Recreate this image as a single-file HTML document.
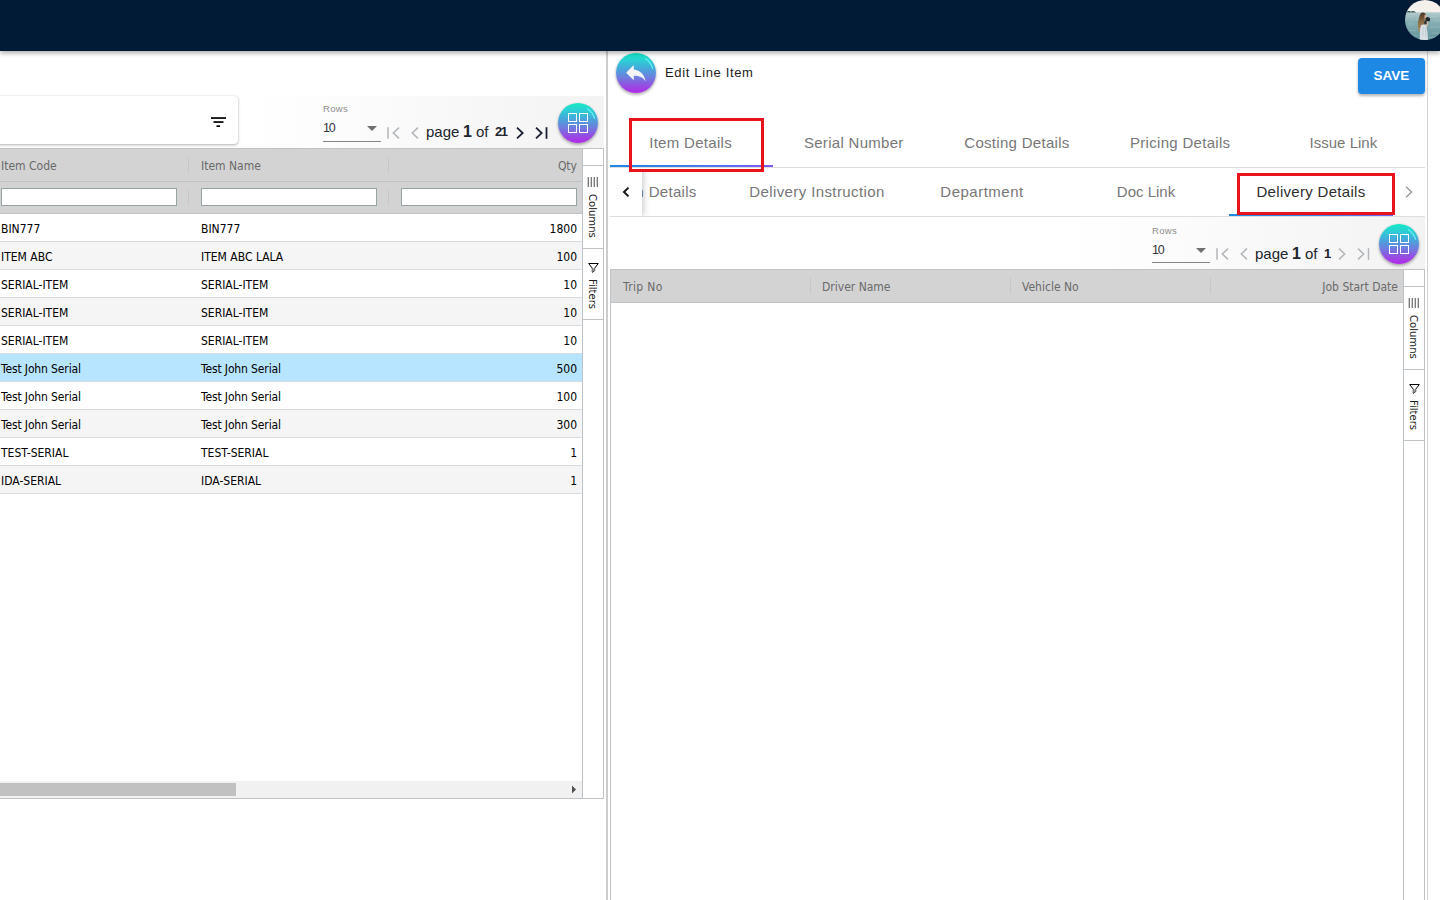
<!DOCTYPE html>
<html lang="en">
<head>
<meta charset="utf-8">
<title>Edit Line Item</title>
<style>
*{box-sizing:border-box;margin:0;padding:0}
html,body{width:1440px;height:900px;overflow:hidden;background:#fff}
body{position:relative;font-family:"Liberation Sans",sans-serif;font-size:12px;color:#000}
.abs{position:absolute}
#topbar{position:absolute;left:0;top:0;width:1440px;height:51px;background:#011a35;box-shadow:0 2px 5px rgba(0,0,0,.34);z-index:20}
#avatar{position:absolute;left:1405px;top:0;width:40px;height:40px;z-index:21}
#searchcard{position:absolute;left:-20px;top:96px;width:258px;height:48px;background:#fff;border-radius:4px;box-shadow:0 1px 3px rgba(0,0,0,.3),0 0 1px rgba(0,0,0,.18);z-index:3}
.pagbar{position:absolute;height:52px}
.pagbar .lbl{position:absolute;font-size:9.5px;letter-spacing:.3px;line-height:12px;color:#8d8d8d}
.pagbar .val{position:absolute;font-size:12.5px;line-height:14px;color:#333}
.pagbar .ul{position:absolute;height:1px;background:#858585}
.pagbar .dd{position:absolute;width:0;height:0;border-left:5px solid transparent;border-right:5px solid transparent;border-top:5px solid #707070}
.pagbar .pt{position:absolute;font-size:15px;line-height:18px;color:#20242c;white-space:nowrap}
.pagbar .pt.b{font-weight:bold;font-size:16px}
.pagbar svg{position:absolute;overflow:visible}
.fab{position:absolute;width:40px;height:40px;border-radius:50%;background:linear-gradient(180deg,#12eac4 0%,#2bd0d4 18%,#47a6db 40%,#6c80de 60%,#9251e2 80%,#b22ae8 100%);box-shadow:0 2px 3px rgba(0,0,0,.28),0 0 2px rgba(0,0,0,.15)}
.fab svg{position:absolute;left:0;top:0}
.grid{position:absolute;font-family:"DejaVu Sans Condensed","Liberation Sans",sans-serif;font-size:12px;color:#000;overflow:hidden}
.hrow{position:absolute;left:0;background:#d3d3d3}
.hline{position:absolute;left:0;height:1px;background:#bdc3c7}
.hcell{position:absolute;color:#6a6a6a;font-size:12px;white-space:nowrap;line-height:16px}
.hsep{position:absolute;width:1px;background:#c4c8ca}
.finp{position:absolute;height:18px;background:#fff;border:1px solid #95a5a6}
.row{position:absolute;left:0;height:28px;border-bottom:1px solid #d9dcde;background:#fff}
.row.odd{background:#f5f5f5}
.row.sel{background:#b7e4ff}
.row span{position:absolute;top:7px;line-height:16px;white-space:nowrap}
.side{position:absolute;background:#fff;border:1px solid #bdc3c7;font-family:"DejaVu Sans Condensed","Liberation Sans",sans-serif}
.side .b{position:absolute;left:0;width:100%;height:1px;background:#bdc3c7}
.side svg{position:absolute;overflow:visible}
.vtxt{position:absolute;writing-mode:vertical-rl;font-size:11.2px;color:#1a1a1a;line-height:14px;white-space:nowrap}
.tab{position:absolute;font-size:15px;letter-spacing:.3px;color:#777;text-align:center;white-space:nowrap;line-height:20px;height:20px}
.tab.on{color:#2e2e2e}
.ink{position:absolute;height:2px}
.redbox{position:absolute;border:3px solid #e8121c;z-index:5}
</style>
</head>
<body>
<div id="topbar"></div>
<svg id="avatar" width="40" height="40" viewBox="0 0 40 40"><defs><clipPath id="avc"><circle cx="20" cy="20" r="20"/></clipPath><linearGradient id="sky" x1="0" y1="0" x2="1" y2="0"><stop offset="0" stop-color="#f1f1ee"/><stop offset="1" stop-color="#f7f0ea"/></linearGradient><linearGradient id="sea" x1="0" y1="0" x2="0" y2="1"><stop offset="0" stop-color="#b4cccd"/><stop offset=".25" stop-color="#86aeb2"/><stop offset=".6" stop-color="#6a9aa0"/><stop offset="1" stop-color="#4f828a"/></linearGradient><linearGradient id="hair" x1="0" y1="0" x2="0" y2="1"><stop offset="0" stop-color="#4a3526"/><stop offset=".45" stop-color="#8a6a45"/><stop offset="1" stop-color="#b4946a"/></linearGradient></defs><g clip-path="url(#avc)"><rect width="40" height="40" fill="url(#sea)" y="12"/><rect width="40" height="12.300" fill="url(#sky)"/><path d="M1 12.600c.8-1.300 2.200-1.900 3.600-1.500c.9.300 1.400.5 2.200.1c1.200-.600 2.600-.300 3.400.500c.5.500.8.800 1.200.9z" fill="#3f5b56"/><g stroke="#c4d8d9" stroke-opacity=".45" stroke-width=".6" fill="none"><path d="M2 17h6M11 19.500h5M26 16.500h7M29 21h8M3 24h7M25 27h9M5 30.500h6M27 33h7M9 35.500h4M24 37.500h6M30 14h6M4 14.500h5"/></g><path d="M17 12.700c2-.600 3.600.500 3.900 2.300l-.3 3.200l-1 3l.3 4.500l-1.500 7.300l-3.600-.500c-1.800-2.800-2.400-6.500-1.700-10.500c.4-2.400.9-4.500 1.500-6.300c.5-1.600 1.300-2.700 2.400-3z" fill="url(#hair)"/><path d="M19.700 14.600c1 .2 1.700 1 1.700 2.200c0 1.500-.5 2.900-1.500 3.500c-.5-1.800-.6-3.900-.2-5.700z" fill="#d8b399"/><path d="M20.800 21.200c.9-.3 1.900.1 2.100.9c.2 1.600-.2 3.400-1 5.100l-1.300-.4c.4-1.800.5-3.800.2-5.600z" fill="#dcb9a2"/><path d="M16.300 25c1.600-.900 3.700-.800 4.700.300l1.200 5.400l.9 9.300h-8.600l.6-8c-.2-2.700.3-5.200 1.200-7z" fill="#d9dfe6"/><path d="M18.200 26.500c.2 3 .1 6-.5 9.500M20.300 28c.4 3 .6 6 .5 9" stroke="#b4bfca" stroke-width=".6" fill="none"/><rect x="20.400" y="17.700" width="4.600" height="3.600" rx=".7" fill="#1e2528"/><rect x="21.600" y="17" width="2" height="1.200" fill="#2a3236"/><rect x="19.300" y="21" width="2.400" height="3.200" rx=".8" fill="#2a2f30"/></g></svg>
<div class="pagbar" style="left:244px;top:96px;width:360px;background:linear-gradient(90deg,#fff 0,#fdfdfd 20%,#f3f3f3 100%)">
<div class="lbl" style="left:79px;top:7px">Rows</div>
<div class="val" style="left:79px;top:25px;letter-spacing:-1.2px">10</div>
<div class="ul" style="left:79px;top:45px;width:58px"></div>
<div class="dd" style="left:123px;top:30px"></div>
<svg style="left:143px;top:31px" width="13" height="12" viewBox="0 0 13 12" fill="none" stroke="#b2b5b9" stroke-width="1.5"><path d="M1 0.2V11.8"/><path d="M12 0.6L6.3 6L12 11.4"/></svg>
<svg style="left:167px;top:31px" width="8" height="12" viewBox="0 0 8 12" fill="none" stroke="#b2b5b9" stroke-width="1.5"><path d="M7 0.6L1.3 6L7 11.4"/></svg>
<div class="pt" style="left:182px;top:27px">page</div>
<div class="pt b" style="left:219px;top:27px">1</div>
<div class="pt" style="left:232px;top:27px">of</div>
<div class="pt b" style="left:251px;top:27px;font-size:13px;letter-spacing:-1.5px">21</div>
<svg style="left:272px;top:31px" width="8" height="12" viewBox="0 0 8 12" fill="none" stroke="#1c2133" stroke-width="1.8"><path d="M1 0.6L6.7 6L1 11.4"/></svg>
<svg style="left:291px;top:31px" width="13" height="12" viewBox="0 0 13 12" fill="none" stroke="#1c2133" stroke-width="1.8"><path d="M1 0.6L6.7 6L1 11.4"/><path d="M11.5 0.2V11.8"/></svg>
</div>
<div id="searchcard"><svg class="abs" style="left:228px;top:16px" width="20" height="20" viewBox="0 0 20 20"><g fill="#000"><rect x="3" y="5.200" width="15" height="1.700"/><rect x="5.500" y="9.200" width="10" height="1.700"/><rect x="8.500" y="13.300" width="3.600" height="1.700"/></g></svg></div>
<div class="fab" style="left:558px;top:103px"><svg width="40" height="40" viewBox="0 0 40 40" fill="none"><g stroke="#fff" stroke-width="1"><rect x="10.5" y="10.5" width="8" height="8"/><rect x="21.5" y="10.5" width="8" height="8"/><rect x="10.5" y="21.5" width="8" height="8"/><rect x="21.5" y="21.5" width="8" height="8"/></g><path d="M29.5 5.8 A17.5 17.5 0 0 1 36.6 15.5" stroke="#6ffaf2" stroke-opacity=".9" stroke-width="1.2" stroke-linecap="round"/></svg></div>
<div class="grid" style="left:0;top:148px;width:582px;height:651px;border-top:1px solid #bdc3c7;border-bottom:1px solid #bdc3c7">
<div class="hrow" style="top:0;width:582px;height:64px"></div>
<div class="hline" style="top:32px;width:582px"></div>
<div class="hline" style="top:64px;width:582px"></div>
<div class="hcell" style="left:1px;top:9px">Item Code</div>
<div class="hcell" style="left:201px;top:9px">Item Name</div>
<div class="hcell" style="right:5px;top:9px">Qty</div>
<div class="hsep" style="left:188px;top:8px;height:16px"></div>
<div class="hsep" style="left:188px;top:41px;height:15px"></div>
<div class="hsep" style="left:388px;top:8px;height:16px"></div>
<div class="hsep" style="left:388px;top:41px;height:15px"></div>
<div class="finp" style="left:1px;top:39px;width:176px"></div>
<div class="finp" style="left:201px;top:39px;width:176px"></div>
<div class="finp" style="left:401px;top:39px;width:176px"></div>
<div class="row" style="top:65px;width:582px"><span style="left:1px">BIN777</span><span style="left:201px">BIN777</span><span style="right:5px">1800</span></div>
<div class="row odd" style="top:93px;width:582px"><span style="left:1px">ITEM ABC</span><span style="left:201px">ITEM ABC LALA</span><span style="right:5px">100</span></div>
<div class="row" style="top:121px;width:582px"><span style="left:1px">SERIAL-ITEM</span><span style="left:201px">SERIAL-ITEM</span><span style="right:5px">10</span></div>
<div class="row odd" style="top:149px;width:582px"><span style="left:1px">SERIAL-ITEM</span><span style="left:201px">SERIAL-ITEM</span><span style="right:5px">10</span></div>
<div class="row" style="top:177px;width:582px"><span style="left:1px">SERIAL-ITEM</span><span style="left:201px">SERIAL-ITEM</span><span style="right:5px">10</span></div>
<div class="row odd sel" style="top:205px;width:582px"><span style="left:1px;letter-spacing:-.13px">Test John Serial</span><span style="left:201px;letter-spacing:-.13px">Test John Serial</span><span style="right:5px">500</span></div>
<div class="row" style="top:233px;width:582px"><span style="left:1px;letter-spacing:-.13px">Test John Serial</span><span style="left:201px;letter-spacing:-.13px">Test John Serial</span><span style="right:5px">100</span></div>
<div class="row odd" style="top:261px;width:582px"><span style="left:1px;letter-spacing:-.13px">Test John Serial</span><span style="left:201px;letter-spacing:-.13px">Test John Serial</span><span style="right:5px">300</span></div>
<div class="row" style="top:289px;width:582px"><span style="left:1px">TEST-SERIAL</span><span style="left:201px">TEST-SERIAL</span><span style="right:5px">1</span></div>
<div class="row odd" style="top:317px;width:582px"><span style="left:1px">IDA-SERIAL</span><span style="left:201px">IDA-SERIAL</span><span style="right:5px">1</span></div>
<div class="abs" style="left:0;top:632px;width:582px;height:17px;background:#f1f1f1"></div>
<div class="abs" style="left:0;top:634px;width:236px;height:13px;background:#c1c1c1"></div>
<svg class="abs" style="left:571px;top:636px" width="6" height="9" viewBox="0 0 6 9"><path d="M1 0.5L5 4.5L1 8.5Z" fill="#505050"/></svg>
</div>
<div class="side" style="left:582px;top:148px;width:22px;height:651px;">
<div class="b" style="top:16px"></div>
<svg style="left:4px;top:28px" width="12" height="10" viewBox="0 0 12 10"><g fill="#5a5a5a"><rect x="0.7" y="0" width="1.1" height="10"/><rect x="3.7" y="0" width="1.1" height="10"/><rect x="6.7" y="0" width="1.1" height="10"/><rect x="9.7" y="0" width="1.1" height="10"/></g></svg>
<div class="vtxt" style="left:2px;top:45px">Columns</div>
<div class="b" style="top:99px"></div>
<svg style="left:4.500px;top:113.500px" width="11" height="10" viewBox="0 0 11 10" fill="none" stroke="#000" stroke-width="1" stroke-linejoin="round"><path d="M0.700 0.500H10.300L6.700 5.200V7.600L4.300 9.300V5.200Z" fill="none"/><path d="M4.300 5.200H6.700V7.600L4.300 9.300Z" fill="#9a9a9a" stroke="none"/></svg>
<div class="vtxt" style="left:2px;top:130px">Filters</div>
<div class="b" style="top:170px"></div>
</div>
<div class="abs" style="left:606px;top:50px;width:2px;height:850px;background:#cdcdcd"></div>
<div class="fab" style="left:616px;top:53px"><svg width="40" height="40" viewBox="0 0 40 40" fill="none"><path transform="translate(6.900 6.600) scale(1.090)" d="M10 9V5l-7 7 7 7v-4.100c5 0 8.500 1.600 11 5.100-1-5-4-10-11-11z" fill="#f4f4f4"/><path d="M29.500 5.800 A17.500 17.500 0 0 1 36.600 15.500" stroke="#6ffaf2" stroke-opacity=".9" stroke-width="1.2" stroke-linecap="round"/></svg></div>
<div class="abs" style="left:665px;top:64px;font-size:13px;letter-spacing:.65px;line-height:18px;color:#1d1d1d;white-space:nowrap">Edit Line Item</div>
<div class="abs" style="left:1358px;top:58px;width:67px;height:36px;border-radius:4px;background:#1e88e5;box-shadow:0 2px 3px rgba(0,0,0,.3);color:#fff;font-weight:bold;font-size:13.5px;letter-spacing:0;line-height:36px;text-align:center">SAVE</div>
<div class="tab" style="left:609.0px;top:133px;width:163.2px">Item Details</div>
<div class="tab" style="left:772.2px;top:133px;width:163.2px">Serial Number</div>
<div class="tab" style="left:935.4px;top:133px;width:163.2px">Costing Details</div>
<div class="tab" style="left:1098.6px;top:133px;width:163.2px">Pricing Details</div>
<div class="tab" style="left:1261.8px;top:133px;width:163.2px;letter-spacing:0px">Issue Link</div>
<div class="abs" style="left:610px;top:167px;width:815px;height:1px;background:#dedede"></div>
<div class="ink" style="left:610px;top:165px;width:163px;background:linear-gradient(90deg,#1e88e5 0%,#4a78ea 60%,#8258f2 100%)"></div>
<div class="redbox" style="left:629px;top:118px;width:135px;height:54px"></div>
<div class="abs" style="left:642px;top:168px;width:751px;height:48px;overflow:hidden">
<div class="tab" style="left:-69.1px;top:14px;width:164.600px">Item Details</div>
<div class="tab" style="left:92.7px;top:14px;width:164.600px;letter-spacing:0.4px">Delivery Instruction</div>
<div class="tab" style="left:257.7px;top:14px;width:164.600px;letter-spacing:0.5px">Department</div>
<div class="tab" style="left:421.7px;top:14px;width:164.600px;letter-spacing:0px">Doc Link</div>
<div class="tab on" style="left:586.7px;top:14px;width:164.600px">Delivery Details</div>
</div>
<div class="abs" style="left:610px;top:216px;width:815px;height:1px;background:#dedede"></div>
<div class="ink" style="left:1229px;top:214px;width:164px;background:linear-gradient(90deg,#1e88e5 0%,#3f7ee9 60%,#6f62f0 100%)"></div>
<div class="abs" style="left:610px;top:168px;width:32px;height:48px;background:#fff;box-shadow:1px 0 7px rgba(0,0,0,.24);clip-path:inset(4px -12px 0 0)"></div>
<svg class="abs" style="left:621px;top:186px" width="10" height="12" viewBox="0 0 10 12" fill="none" stroke="#151515" stroke-width="2"><path d="M7.500 1.600L3 6L7.500 10.400"/></svg>
<svg class="abs" style="left:1404px;top:186px" width="10" height="12" viewBox="0 0 10 12" fill="none" stroke="#9a9a9a" stroke-width="1.500"><path d="M2 0.800L7.600 6L2 11.200"/></svg>
<div class="redbox" style="left:1237px;top:173px;width:158px;height:42px"></div>
<div class="pagbar" style="left:1065px;top:217px;width:360px;background:linear-gradient(90deg,#fff 0,#fdfdfd 20%,#f3f3f3 100%)">
<div class="lbl" style="left:87px;top:8px">Rows</div>
<div class="val" style="left:87px;top:26px;letter-spacing:-1.2px">10</div>
<div class="ul" style="left:87px;top:45px;width:58px"></div>
<div class="dd" style="left:131px;top:31px"></div>
<svg style="left:151px;top:31px" width="13" height="12" viewBox="0 0 13 12" fill="none" stroke="#b2b5b9" stroke-width="1.5"><path d="M1 0.2V11.8"/><path d="M12 0.6L6.3 6L12 11.4"/></svg>
<svg style="left:175px;top:31px" width="8" height="12" viewBox="0 0 8 12" fill="none" stroke="#b2b5b9" stroke-width="1.5"><path d="M7 0.6L1.3 6L7 11.4"/></svg>
<div class="pt" style="left:190px;top:28px">page</div>
<div class="pt b" style="left:227px;top:28px">1</div>
<div class="pt" style="left:240px;top:28px">of</div>
<div class="pt b" style="left:259px;top:28px;font-size:13px;letter-spacing:-1.5px">1</div>
<svg style="left:272.6px;top:31px" width="8" height="12" viewBox="0 0 8 12" fill="none" stroke="#b2b5b9" stroke-width="1.5"><path d="M1 0.6L6.7 6L1 11.4"/></svg>
<svg style="left:291.6px;top:31px" width="13" height="12" viewBox="0 0 13 12" fill="none" stroke="#b2b5b9" stroke-width="1.5"><path d="M1 0.6L6.7 6L1 11.4"/><path d="M11.5 0.2V11.8"/></svg>
</div>
<div class="fab" style="left:1379px;top:224px"><svg width="40" height="40" viewBox="0 0 40 40" fill="none"><g stroke="#fff" stroke-width="1"><rect x="10.5" y="10.5" width="8" height="8"/><rect x="21.5" y="10.5" width="8" height="8"/><rect x="10.5" y="21.5" width="8" height="8"/><rect x="21.5" y="21.5" width="8" height="8"/></g><path d="M29.5 5.8 A17.5 17.5 0 0 1 36.6 15.5" stroke="#6ffaf2" stroke-opacity=".9" stroke-width="1.2" stroke-linecap="round"/></svg></div>
<div class="grid" style="left:610px;top:269px;width:793px;height:640px;border-top:1px solid #bdc3c7;border-left:1px solid #bdc3c7">
<div class="hrow" style="top:0;width:793px;height:32px"></div>
<div class="hline" style="top:32px;width:793px"></div>
<div class="hcell" style="left:12px;top:9px;letter-spacing:.35px">Trip No</div>
<div class="hcell" style="left:211px;top:9px">Driver Name</div>
<div class="hcell" style="left:411px;top:9px">Vehicle No</div>
<div class="hcell" style="left:600px;width:187px;text-align:right;top:9px">Job Start Date</div>
<div class="hsep" style="left:199px;top:8px;height:16px"></div>
<div class="hsep" style="left:399px;top:8px;height:16px"></div>
<div class="hsep" style="left:599px;top:8px;height:16px"></div>
</div>
<div class="side" style="left:1403px;top:269px;width:22px;height:640px;">
<div class="b" style="top:16px"></div>
<svg style="left:4px;top:28px" width="12" height="10" viewBox="0 0 12 10"><g fill="#5a5a5a"><rect x="0.7" y="0" width="1.1" height="10"/><rect x="3.7" y="0" width="1.1" height="10"/><rect x="6.7" y="0" width="1.1" height="10"/><rect x="9.7" y="0" width="1.1" height="10"/></g></svg>
<div class="vtxt" style="left:2px;top:45px">Columns</div>
<div class="b" style="top:99px"></div>
<svg style="left:4.500px;top:113.500px" width="11" height="10" viewBox="0 0 11 10" fill="none" stroke="#000" stroke-width="1" stroke-linejoin="round"><path d="M0.700 0.500H10.300L6.700 5.200V7.600L4.300 9.300V5.200Z" fill="none"/><path d="M4.300 5.200H6.700V7.600L4.300 9.300Z" fill="#9a9a9a" stroke="none"/></svg>
<div class="vtxt" style="left:2px;top:130px">Filters</div>
<div class="b" style="top:170px"></div>
</div>
<div class="abs" style="left:1427px;top:50px;width:1px;height:850px;background:#d4d4d4"></div>
</body>
</html>
